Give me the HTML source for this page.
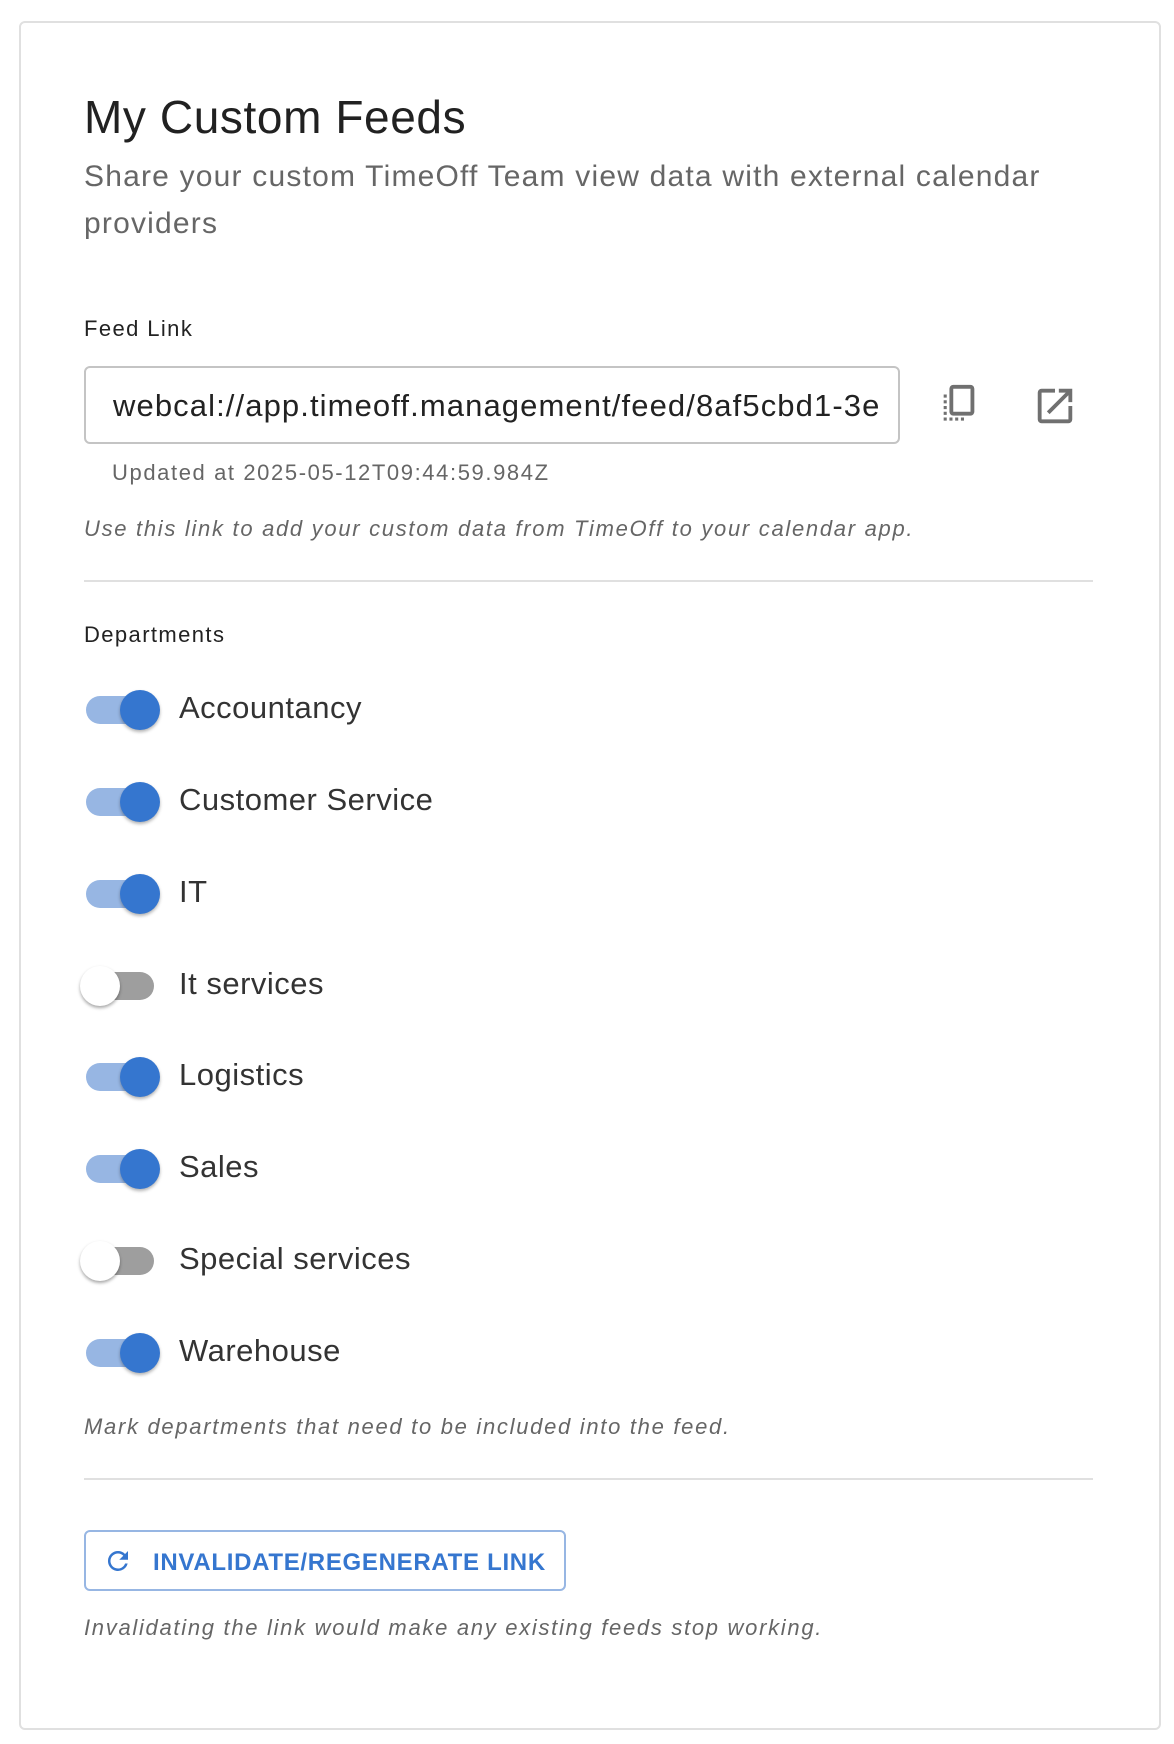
<!DOCTYPE html>
<html><head><style>
*{box-sizing:border-box;margin:0;padding:0}
body{width:1174px;height:1744px;background:#fff;font-family:"Liberation Sans",sans-serif;position:relative;overflow:hidden}
.card{position:absolute;left:19px;top:21px;width:1142px;height:1709px;border:2px solid #e0e0e0;border-radius:6px}
.a{position:absolute;white-space:nowrap}
.title{left:84px;top:90px;font-size:46px;color:#212121;letter-spacing:0.6px}
.sub{left:84px;top:153px;font-size:30px;line-height:47px;color:#666;white-space:normal;width:1000px;letter-spacing:1.2px}
.lbl{font-size:22px;color:#222;left:84px;letter-spacing:1.4px}
.input{position:absolute;left:84px;top:366px;width:816px;height:78px;border:2px solid #c4c4c4;border-radius:6px;overflow:hidden}
.input span{position:absolute;left:27px;top:20px;font-size:31px;color:#222;white-space:nowrap;letter-spacing:1.1px}
.help{font-size:22px;font-style:italic;color:#666;left:84px;letter-spacing:1.7px}
.hr{position:absolute;left:84px;width:1009px;height:2px;background:#e0e0e0}
.row{position:absolute;left:80px;height:44px}
.track{position:absolute;left:6px;top:8px;width:68px;height:28px;border-radius:14px;background:#97b6e3}
.thumb{position:absolute;left:40px;top:2px;width:40px;height:40px;border-radius:50%;background:#3576cf;box-shadow:0 2px 3px rgba(0,0,0,.3)}
.off .track{background:#9e9e9e}
.off .thumb{left:0;background:#fff;box-shadow:0 2px 3px rgba(0,0,0,.35)}
.row .t{position:absolute;left:99px;top:2px;font-size:31px;color:#333;white-space:nowrap;letter-spacing:0.5px}
.btn{position:absolute;left:84px;top:1530px;width:482px;height:61px;border:2px solid #97b6e3;border-radius:6px}
.btn span{position:absolute;left:67px;top:17px;font-size:24px;font-weight:bold;color:#3576cf;letter-spacing:0.7px}
</style></head><body>
<div class="card"></div>
<div class="a title">My Custom Feeds</div>
<div class="a sub">Share your custom TimeOff Team view data with external calendar providers</div>
<div class="a lbl" style="top:316px">Feed Link</div>
<div class="input"><span>webcal://app.timeoff.management/feed/8af5cbd1-3e</span></div>
<svg class="a" style="left:936px;top:383px" width="46" height="46" viewBox="0 0 24 24"><path fill="#707070" d="M9 1h9a2 2 0 0 1 2 2v12a2 2 0 0 1-2 2H9a2 2 0 0 1-2-2V3a2 2 0 0 1 2-2zm0 2v12h9V3zM4 6h1.6v1.6H4zm0 3h1.6v1.6H4zm0 3h1.6v1.6H4zm0 3h1.6v1.6H4zm0 3h1.6v1.6H4zm3 0h1.6v1.6H7zm3 0h1.6v1.6H10zm3 0h1.6v1.6H13z"/></svg>
<svg class="a" style="left:1032px;top:383px" width="46" height="46" viewBox="0 0 24 24"><path fill="#707070" d="M19 19H5V5h7V3H5a2 2 0 0 0-2 2v14a2 2 0 0 0 2 2h14a2 2 0 0 0 2-2v-7h-2v7zM14 3v2h3.59l-9.830 9.83 1.41 1.41L19 6.41V10h2V3h-7z"/></svg>
<div class="a" style="left:112px;top:460px;font-size:22px;color:#666;letter-spacing:1.6px">Updated at 2025-05-12T09:44:59.984Z</div>
<div class="a help" style="top:516px">Use this link to add your custom data from TimeOff to your calendar app.</div>
<div class="hr" style="top:580px"></div>
<div class="a lbl" style="top:622px">Departments</div>
<div class="row" style="top:688px"><div class="track"></div><div class="thumb"></div><div class="t">Accountancy</div></div>
<div class="row" style="top:780px"><div class="track"></div><div class="thumb"></div><div class="t">Customer Service</div></div>
<div class="row" style="top:872px"><div class="track"></div><div class="thumb"></div><div class="t">IT</div></div>
<div class="row off" style="top:964px"><div class="track"></div><div class="thumb"></div><div class="t">It services</div></div>
<div class="row" style="top:1055px"><div class="track"></div><div class="thumb"></div><div class="t">Logistics</div></div>
<div class="row" style="top:1147px"><div class="track"></div><div class="thumb"></div><div class="t">Sales</div></div>
<div class="row off" style="top:1239px"><div class="track"></div><div class="thumb"></div><div class="t">Special services</div></div>
<div class="row" style="top:1331px"><div class="track"></div><div class="thumb"></div><div class="t">Warehouse</div></div>
<div class="a help" style="top:1414px">Mark departments that need to be included into the feed.</div>
<div class="hr" style="top:1478px"></div>
<div class="btn"><svg style="position:absolute;left:17px;top:14px" width="30" height="30" viewBox="0 0 24 24"><path fill="#3576cf" d="M17.65 6.35A7.958 7.958 0 0 0 12 4a8 8 0 1 0 7.73 10h-2.08A6 6 0 1 1 12 6c1.66 0 3.14.69 4.22 1.78L13 11h7V4l-2.35 2.35z"/></svg><span>INVALIDATE/REGENERATE LINK</span></div>
<div class="a help" style="top:1615px">Invalidating the link would make any existing feeds stop working.</div>
</body></html>
